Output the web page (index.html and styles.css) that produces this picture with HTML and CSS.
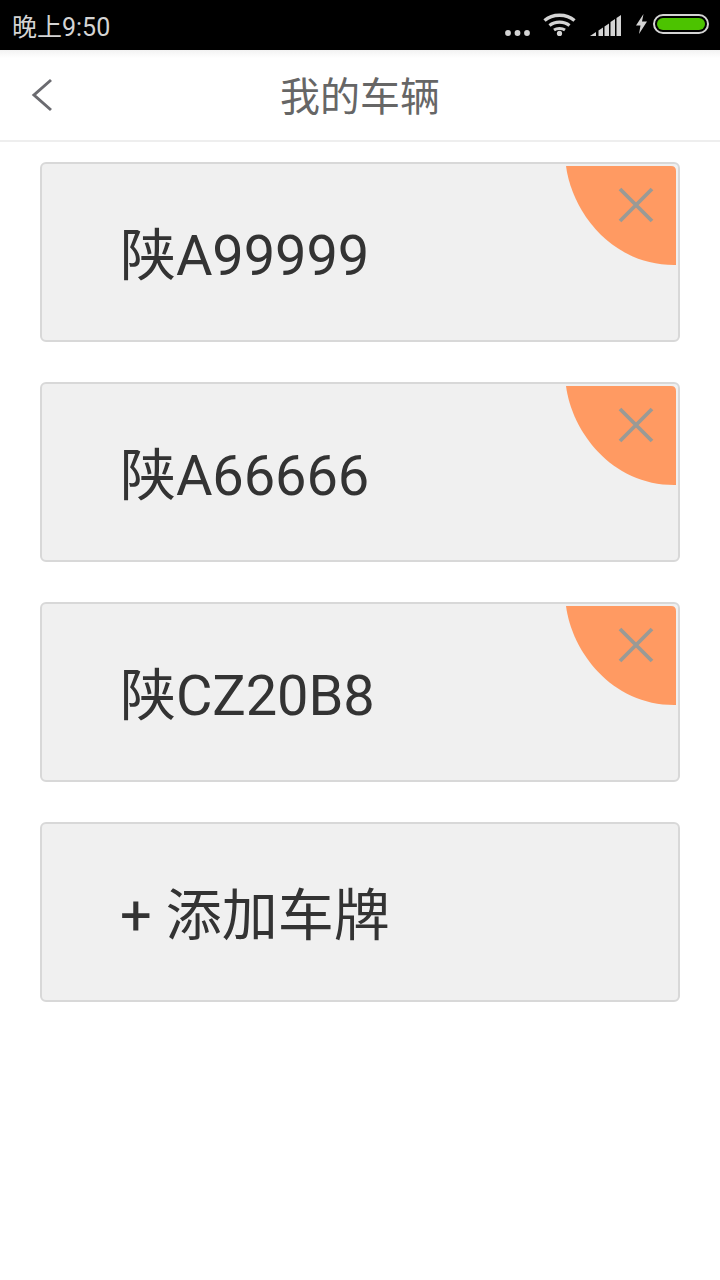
FILE: index.html
```html
<!DOCTYPE html>
<html lang="zh">
  <head>
    <meta charset="UTF-8" />
    <meta name="viewport" content="width=device-width, initial-scale=1.0" />
    <title>我的车辆</title>
    <link rel="stylesheet" href="styles.css">
  </head>
  <body>
    <!-- 状态栏 -->
    <div class="status-bar">
      <span class="status-time">晚上9:50</span>
      <div class="status-icons">
        <svg class="icon-dots" width="25" height="6" viewBox="0 0 25 6">
          <circle cx="3" cy="3" r="2.9" fill="#d4d4d4" />
          <circle cx="12.5" cy="3" r="2.9" fill="#d4d4d4" />
          <circle cx="22" cy="3" r="2.9" fill="#d4d4d4" />
        </svg>
        <svg class="icon-wifi" width="33" height="23" viewBox="0 0 33 23">
          <path d="M1.5 7.5C9.5 0.5 23.5 0.5 31.5 7.5" fill="none" stroke="#d4d4d4" stroke-width="3.4" />
          <path d="M6.5 12.5C12 8 21 8 26.5 12.5" fill="none" stroke="#d4d4d4" stroke-width="3.2" />
          <path d="M11 17C14 15 19 15 22 17" fill="none" stroke="#d4d4d4" stroke-width="3" />
          <circle cx="16.5" cy="20.4" r="2.6" fill="#d4d4d4" />
        </svg>
        <svg class="icon-signal" width="31" height="21" viewBox="0 0 31 21">
          <path d="M0 21L6 17V21Z" fill="#d4d4d4" />
          <path d="M8.5 15.5L13 12.5V21H8.5Z" fill="#d4d4d4" />
          <path d="M14.5 11.5L19 8.5V21H14.5Z" fill="#d4d4d4" />
          <path d="M20.5 7L25 4V21H20.5Z" fill="#d4d4d4" />
          <path d="M26.5 3L31 0V21H26.5Z" fill="#d4d4d4" />
        </svg>
        <svg class="icon-charge" width="11" height="20" viewBox="0 0 11 20">
          <path d="M7.5 0L0 11.5H4.5L3 20L11 7.5H6Z" fill="#d4d4d4" />
        </svg>
        <div class="battery"><div class="battery-level"></div></div>
      </div>
    </div>

    <!-- 标题栏 -->
    <div class="title-bar">
      <svg class="back-icon" width="22" height="34" viewBox="0 0 22 34">
        <path d="M20 2L3 17L20 32" fill="none" stroke="#6b6b70" stroke-width="3" />
      </svg>
      <h1>我的车辆</h1>
    </div>

    <!-- 车牌列表 -->
    <div class="plate-list">
      <div class="plate-card">
        <span class="plate-no">陕A99999</span>
        <svg class="delete-corner" width="110" height="100" viewBox="0 0 110 100">
          <path d="M0 0H105Q110 0 110 5V99C46 100 6 46 0 0Z" fill="#ff9a62" />
          <path d="M54 23L86 55M86 23L54 55" stroke="#9a9a96" stroke-width="3.8" />
        </svg>
      </div>
      <div class="plate-card">
        <span class="plate-no">陕A66666</span>
        <svg class="delete-corner" width="110" height="100" viewBox="0 0 110 100">
          <path d="M0 0H105Q110 0 110 5V99C46 100 6 46 0 0Z" fill="#ff9a62" />
          <path d="M54 23L86 55M86 23L54 55" stroke="#9a9a96" stroke-width="3.8" />
        </svg>
      </div>
      <div class="plate-card">
        <span class="plate-no">陕CZ20B8</span>
        <svg class="delete-corner" width="110" height="100" viewBox="0 0 110 100">
          <path d="M0 0H105Q110 0 110 5V99C46 100 6 46 0 0Z" fill="#ff9a62" />
          <path d="M54 23L86 55M86 23L54 55" stroke="#9a9a96" stroke-width="3.8" />
        </svg>
      </div>
      <div class="plate-card">
        <span>+ 添加车牌</span>
      </div>
    </div>
  </body>
</html>
```

FILE: styles.css
```css
/* 基本初始化 */
* {
  margin: 0;
  padding: 0;
  box-sizing: border-box;
}

body {
  font-family: "Roboto", "Noto Sans CJK SC", sans-serif;
  background-color: #fff;
  color: #333;
}

/* 状态栏 */
.status-bar {
  height: 50px;
  background-color: #000;
  display: flex;
  align-items: center;
  justify-content: space-between;
  padding: 0 11px 0 12px;
}

.status-time {
  font-size: 25px;
  color: #d4d4d4;
}

.status-icons {
  display: flex;
  align-items: flex-end;
  align-self: flex-end;
  margin-bottom: 14px;
}

.icon-dots {
  margin-right: 13px;
}

.icon-wifi {
  margin-right: 14px;
}

.icon-signal {
  margin-right: 15px;
}

.icon-charge {
  margin: 0 6px 2px 0;
}

.battery {
  width: 56px;
  height: 20px;
  margin-bottom: 2px;
  border: 2px solid #d4d4d4;
  border-radius: 10px;
  padding: 2px;
}

.battery-level {
  height: 100%;
  background-color: #4cc300;
  border-radius: 6px;
}

/* 标题栏 */
.title-bar {
  height: 92px;
  display: flex;
  align-items: center;
  justify-content: center;
  position: relative;
  border-bottom: 2px solid #eee;
  background: linear-gradient(#f2f2f2, #fff 8px);
}

.title-bar h1 {
  font-size: 40px;
  font-weight: 400;
  color: #666;
  margin-bottom: 2px;
}

.back-icon {
  position: absolute;
  left: 31px;
  top: 28px;
}

/* 车牌列表 */
.plate-list {
  display: flex;
  flex-direction: column;
  gap: 40px;
  padding: 20px 40px 0;
}

.plate-card {
  height: 180px;
  background-color: #f0f0f0;
  border: 2px solid #d8d8d8;
  border-radius: 6px;
  display: flex;
  align-items: center;
  padding: 0 0 4px 78px;
  font-size: 56px;
  color: #333;
  position: relative;
}

.plate-no {
  letter-spacing: -0.1px;
}

.delete-corner {
  position: absolute;
  top: 2px;
  right: 2px;
}
```
